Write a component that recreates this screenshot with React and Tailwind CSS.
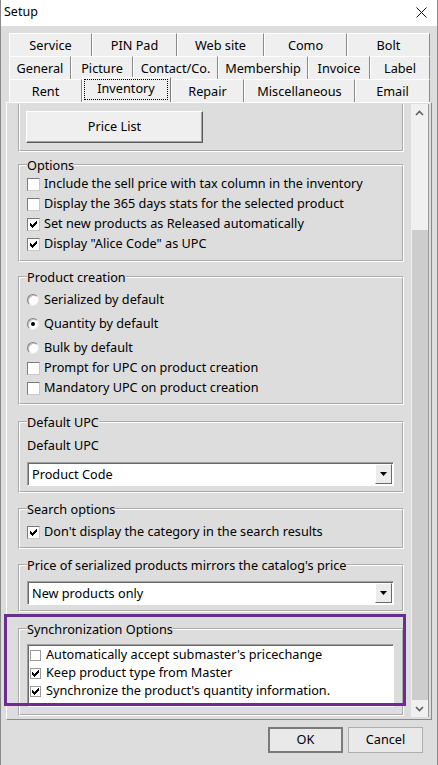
import React from "react";

const tabRows = [
  [
    { label: "Service", w: "w-[83px]" },
    { label: "PIN Pad", w: "w-[85px]" },
    { label: "Web site", w: "w-[87px]" },
    { label: "Como", w: "w-[83px]" },
    { label: "Bolt", w: "w-[83px]" },
  ],
  [
    { label: "General", w: "w-[62px]" },
    { label: "Picture", w: "w-[62px]" },
    { label: "Contact/Co.", w: "w-[85px]" },
    { label: "Membership", w: "w-[90px]" },
    { label: "Invoice", w: "w-[62px]" },
    { label: "Label", w: "w-[60px]" },
  ],
  [
    { label: "Rent", w: "w-[73px]" },
    { label: "Inventory", w: "w-[89px]", selected: true },
    { label: "Repair", w: "w-[73px]" },
    { label: "Miscellaneous", w: "w-[111px]" },
    { label: "Email", w: "w-[75px]" },
  ],
];

// classic 7x7 check bitmap
const checkPixels = [
  [6, 0], [5, 1], [6, 1], [0, 2], [4, 2], [5, 2], [6, 2],
  [0, 3], [1, 3], [3, 3], [4, 3], [5, 3], [0, 4], [1, 4], [2, 4], [3, 4], [4, 4],
  [1, 5], [2, 5], [3, 5], [2, 6],
];

function CheckMark() {
  return (
    <svg width="7" height="7" viewBox="0 0 7 7" shapeRendering="crispEdges">
      {checkPixels.map(([x, y], i) => (
        <rect key={i} x={x} y={y} width="1" height="1" fill="#000" />
      ))}
    </svg>
  );
}

function Checkbox({ checked }) {
  return (
    <div className="w-[13px] h-[13px] shrink-0 bg-white border border-t-[#7a7a7a] border-l-[#7a7a7a] border-r-[#c8c8c8] border-b-[#c8c8c8] flex items-center justify-center">
      {checked && <CheckMark />}
    </div>
  );
}

function SmallCheck({ checked }) {
  return (
    <div className="w-[11px] h-[11px] shrink-0 bg-white border border-[#9a9a9a] flex items-center justify-center">
      {checked && <CheckMark />}
    </div>
  );
}

function Radio({ checked }) {
  return (
    <div className="w-[12px] h-[12px] shrink-0 rounded-full bg-white border border-t-[#808080] border-l-[#808080] border-r-[#e8e8e8] border-b-[#e8e8e8] shadow-[inset_1px_1px_0_#c0c0c0] flex items-center justify-center">
      {checked && <div className="w-[4px] h-[4px] rounded-full bg-black" />}
    </div>
  );
}

function CheckRow({ checked, children }) {
  return (
    <div className="h-[20px] flex items-center gap-[4px]">
      <Checkbox checked={checked} />
      <span>{children}</span>
    </div>
  );
}

function RadioRow({ checked, children, className = "" }) {
  return (
    <div className={"h-[20px] flex items-center gap-[5px] " + className}>
      <Radio checked={checked} />
      <span>{children}</span>
    </div>
  );
}

function Group({ title, className = "", children }) {
  return (
    <fieldset className={"border-2 border-white [--tw-border-style:groove] pl-[7px] pr-[8px] " + className}>
      <legend className="px-0 leading-[16px]">{title}</legend>
      {children}
    </fieldset>
  );
}

function Combo({ value }) {
  return (
    <div className="w-[367px] h-[24px] flex bg-white border border-t-[#a0a0a0] border-l-[#a0a0a0] border-r-white border-b-white shadow-[inset_1px_1px_0_#696969]">
      <div className="flex-1 flex items-center pl-[4px] pt-[1px]">{value}</div>
      <div className="w-[17px] my-[1px] mr-[1px] bg-[#ececec] border border-t-white border-l-white border-r-[#696969] border-b-[#696969] flex items-center justify-center">
        <svg width="7" height="4" viewBox="0 0 7 4">
          <path d="M0 0h7L3.5 4z" fill="#000" />
        </svg>
      </div>
    </div>
  );
}

function Tab({ label, w, selected }) {
  if (selected) {
    return (
      <div className={w + " h-[25px] -mt-[2px] relative z-10 bg-[#efefef] border-t border-l border-white border-r border-r-[#7a7a7a] pt-[1px] pl-[1px] pr-[2px] pb-[2px]"}>
        <div className="h-full border border-dotted border-black flex items-center justify-center pb-[1px]">{label}</div>
      </div>
    );
  }
  return (
    <div className={w + " h-[23px] bg-[#efefef] border-t border-l border-white border-r border-r-[#8a8a8a] flex items-center justify-center pt-[1px]"}>
      {label}
    </div>
  );
}

export default function App() {
  return (
    <div className="w-[438px] h-[765px] bg-[#dddddd] border-x border-[#8a8a8a] text-[12.7px] text-black font-['Noto_Sans',sans-serif] relative overflow-hidden">
      {/* title bar */}
      <div className="h-[26px] bg-white flex items-center justify-between pl-[3px] pr-[10px]">
        <span className="text-[12.5px] pb-[2px]">Setup</span>
        <svg width="11" height="11" viewBox="0 0 11 11" className="mb-[1px]">
          <path d="M0.5 0.5l10 10M10.5 0.5l-10 10" stroke="#111" strokeWidth="1" />
        </svg>
      </div>

      {/* tabs */}
      <div className="mt-[7px] ml-[8px] flex flex-col">
        {tabRows.map((row, i) => (
          <div key={i} className="h-[23px] flex items-end">
            {row.map((t) => (
              <Tab key={t.label} {...t} />
            ))}
          </div>
        ))}
      </div>

      {/* tab panel */}
      <div className="ml-[5px] w-[426px] h-[618px] border border-t-white border-l-white border-r-[#8a8a8a] border-b-[#8a8a8a]">
        <div className="mt-[1px] h-[613px] flex">
          <div className="ml-[11px] w-[386px] overflow-hidden">
            {/* scrolled Price List group */}
            <div className="h-[48px] border-2 border-t-0 border-white [--tw-border-style:groove] pt-[7px] pl-[6px]">
              <button className="w-[177px] h-[32px] bg-[#efefef] border border-t-white border-l-white border-r-[#5a5a5a] border-b-[#5a5a5a] shadow-[inset_-1px_-1px_0_#a0a0a0]">
                Price List
              </button>
            </div>

            <Group title="Options" className="mt-[5px] pt-[1px] pb-[6px]">
              <CheckRow>Include the sell price with tax column in the inventory</CheckRow>
              <CheckRow>Display the 365 days stats for the selected product</CheckRow>
              <CheckRow checked>Set new products as Released automatically</CheckRow>
              <CheckRow checked>Display "Alice Code" as UPC</CheckRow>
            </Group>

            <Group title="Product creation" className="mt-[7px] pt-[5px] pb-[5px]">
              <RadioRow className="mb-[4px]">Serialized by default</RadioRow>
              <RadioRow checked className="mb-[4px]">Quantity by default</RadioRow>
              <RadioRow>Bulk by default</RadioRow>
              <CheckRow>Prompt for UPC on product creation</CheckRow>
              <CheckRow>Mandatory UPC on product creation</CheckRow>
            </Group>

            <Group title="Default UPC" className="mt-[9px] pt-[6px] pb-[5px]">
              <div className="h-[20px] flex items-center">Default UPC</div>
              <div className="mt-[6px]">
                <Combo value="Product Code" />
              </div>
            </Group>

            <Group title="Search options" className="mt-[8px] pt-[5px] pb-[5px]">
              <CheckRow checked>Don't display the category in the search results</CheckRow>
            </Group>

            <Group title="Price of serialized products mirrors the catalog's price" className="mt-[8px] pt-[8px] pb-[5px]">
              <Combo value="New products only" />
            </Group>

            <Group title="Synchronization Options" className="mt-[9px] pt-[7px] pb-[7px]">
              <div className="w-[367px] h-[63px] bg-white border border-t-[#a0a0a0] border-l-[#a0a0a0] border-r-white border-b-white shadow-[inset_1px_1px_0_#696969] pt-[1px] pl-[2px]">
                {[
                  ["Automatically accept submaster's pricechange", false],
                  ["Keep product type from Master", true],
                  ["Synchronize the product's quantity information.", true],
                ].map(([label, on]) => (
                  <div key={label} className="h-[18px] flex items-center gap-[5px]">
                    <SmallCheck checked={on} />
                    <span>{label}</span>
                  </div>
                ))}
              </div>
            </Group>
          </div>

          {/* scrollbar */}
          <div className="ml-[7px] w-[18px] h-full flex flex-col bg-[#f0f0f0] border-r border-[#9a9a9a]">
            <div className="h-[17px] flex items-center justify-center">
              <svg width="9" height="6" viewBox="0 0 9 6">
                <path d="M1 5l3.5-3.5L8 5" stroke="#606060" strokeWidth="1.6" fill="none" />
              </svg>
            </div>
            <div className="h-[109px]" />
            <div className="h-[470px] ml-[1px] bg-[#cdcdcd]" />
            <div className="h-[17px] flex items-center justify-center">
              <svg width="9" height="6" viewBox="0 0 9 6">
                <path d="M1 1l3.5 3.5L8 1" stroke="#606060" strokeWidth="1.6" fill="none" />
              </svg>
            </div>
          </div>
        </div>
      </div>

      {/* buttons */}
      <div className="mt-[7px] flex justify-end gap-[5px] pr-[14px]">
        <button className="w-[75px] h-[26px] bg-[#e9e9e9] border-2 border-[#7a7a7a] pb-[1px]">OK</button>
        <button className="w-[75px] h-[26px] bg-[#e9e9e9] border border-[#adadad] pb-[1px]">Cancel</button>
      </div>

      {/* highlight annotation */}
      <div className="absolute left-[3px] top-[614px] w-[402px] h-[92px] border-[3px] border-[#6b2d91] pointer-events-none" />
    </div>
  );
}
